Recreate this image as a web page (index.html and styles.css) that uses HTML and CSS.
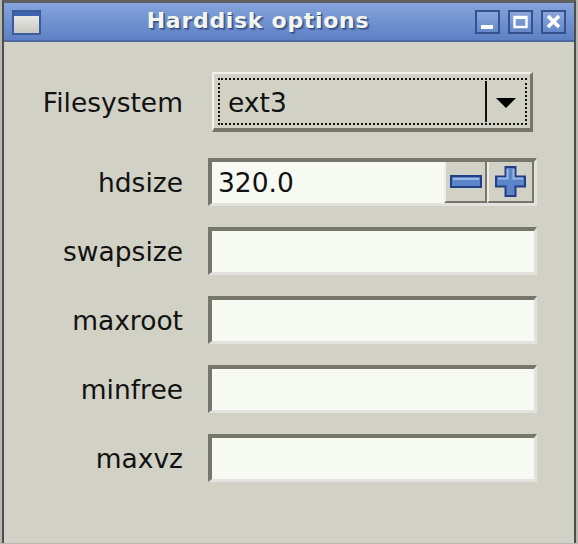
FILE: index.html
```html
<!DOCTYPE html>
<html>
<head>
<meta charset="utf-8">
<link rel="stylesheet" href="styles.css">
</head>
<body>
<div class="desk">
  <div class="window">
    <div class="titlebar">
      <div class="winicon"><div class="winicon-top"></div></div>
      <div class="title">Harddisk options</div>
      <div class="tbtns">
        <div class="tbtn"><svg width="17" height="16" viewBox="0 0 17 16"><rect x="2" y="11" width="12" height="4" fill="#fff"/></svg></div>
        <div class="tbtn"><svg width="17" height="16" viewBox="0 0 17 16"><rect x="2.5" y="3" width="12" height="10" fill="none" stroke="#fff" stroke-width="2.4"/><rect x="2" y="2" width="13" height="3" fill="#fff"/></svg></div>
        <div class="tbtn"><svg width="17" height="16" viewBox="0 0 17 16"><path d="M3 2 L14 13 M14 2 L3 13" stroke="#fff" stroke-width="3.6"/></svg></div>
      </div>
    </div>
    <div class="content">
      <div class="form">
        <div class="label lab-fs">Filesystem</div>
        <div class="combo">
          <div class="combo-focus">
            <span class="combo-text">ext3</span>
            <span class="combo-sep"></span>
            <span class="combo-arrow"><svg width="20" height="10" viewBox="0 0 20 10"><path d="M0 0 H20 L10 10 Z" fill="#000"/></svg></span>
          </div>
        </div>

        <div class="label">hdsize</div>
        <div class="entry spin">
          <div class="spin-text">320.0</div>
          <div class="spin-btn">
            <svg width="32" height="13" viewBox="0 0 32 13"><rect x="1" y="1" width="30" height="11" fill="#5a85c9" stroke="#223f86" stroke-width="2"/><rect x="3" y="3" width="26" height="2" fill="#9bb7e3"/></svg>
          </div>
          <div class="spin-btn">
            <svg width="31" height="31" viewBox="0 0 31 31"><path d="M10.5 1 H20.5 V10.5 H30 V20.5 H20.5 V30 H10.5 V20.5 H1 V10.5 H10.5 Z" fill="#5a85c9" stroke="#223f86" stroke-width="2"/><path d="M12.5 3 V12.5 H3 M18.5 3 V12.5 H28" stroke="#9bb7e3" stroke-width="2" fill="none"/></svg>
          </div>
        </div>

        <div class="label">swapsize</div>
        <div class="entry"></div>

        <div class="label">maxroot</div>
        <div class="entry"></div>

        <div class="label">minfree</div>
        <div class="entry"></div>

        <div class="label">maxvz</div>
        <div class="entry"></div>
      </div>
    </div>
  </div>
</div>
</body>
</html>
```

FILE: styles.css
```css
html, body {
  margin: 0;
  padding: 0;
}
body {
  width: 578px;
  height: 544px;
  overflow: hidden;
  background: #e9e8e2;
  font-family: "DejaVu Sans", "Liberation Sans", sans-serif;
}
.desk {
  height: 544px;
  padding-left: 2px;
  padding-right: 2px;
  background: #b9b8b0;
  box-sizing: border-box;
}
.window {
  height: 543px;
  box-sizing: border-box;
  border-left: 2px solid #4d4d4d;
  border-right: 2px solid #4d4d4d;
  border-top: 3px solid #606060;
  background: #d2d1c5;
  display: flex;
  flex-direction: column;
}
.titlebar {
  height: 37px;
  border-bottom: 2px solid #4a68a2;
  background: linear-gradient(to bottom, #86a4dc 0%, #7394d2 45%, #5e80c4 100%);
  display: flex;
  align-items: center;
  padding: 0 8px 0 8px;
}
.winicon {
  width: 25px;
  height: 21px;
  border: 2px solid #3b5c9c;
  background: linear-gradient(to bottom, #eeeeec 0%, #c9c8c2 100%);
  margin-top: 1px;
}
.winicon-top {
  height: 4px;
  background: #3d63b0;
}
.title {
  flex: 1;
  text-align: center;
  color: #f4f6ee;
  font-weight: bold;
  font-size: 22px;
  letter-spacing: 0.7px;
  text-shadow: 1px 1px 0 #34508a, 2px 2px 1px rgba(40,60,110,0.5);
  margin-top: -2px;
}
.tbtns {
  display: flex;
  gap: 8px;
}
.tbtn {
  width: 21px;
  height: 20px;
  border: 2px solid #36528e;
  background: linear-gradient(to bottom, #8aa6dc, #6688c9);
  display: flex;
  align-items: center;
  justify-content: center;
}
.content {
  flex: 1;
  padding-top: 30px;
}
.form {
  display: grid;
  grid-template-columns: 179px 329px;
  column-gap: 25px;
  row-gap: 21px;
  align-items: center;
}
.label {
  text-align: right;
  font-size: 26.5px;
  color: #111;
  padding-top: 1px;
}
.lab-fs {
  margin-bottom: 5px;
}
.combo {
  margin: 0 4px 5px 4px;
  height: 60px;
  box-sizing: border-box;
  border-top: 2px solid #f2f1ec;
  border-left: 2px solid #f2f1ec;
  border-right: 3px solid #77766a;
  border-bottom: 4px solid #77766a;
  padding: 4px 3px 3px 4px;
  background: #d2d1c5;
}
.combo-focus {
  height: 100%;
  box-sizing: border-box;
  border: 2px dotted #111;
  display: flex;
  align-items: center;
}
.combo-text {
  flex: 1;
  font-size: 26.5px;
  color: #111;
  padding-left: 8px;
  padding-top: 1px;
}
.combo-sep {
  align-self: stretch;
  width: 2px;
  background: #111;
  margin: 1px 0;
}
.combo-arrow {
  width: 38px;
  display: flex;
  justify-content: center;
  padding-top: 2px;
}
.entry {
  height: 48px;
  box-sizing: border-box;
  border-top: 4px solid #77766a;
  border-left: 4px solid #77766a;
  border-right: 3px solid #e3e2df;
  border-bottom: 3px solid #e3e2df;
  background: #f6faf3;
}
.spin {
  display: flex;
}
.spin-text {
  flex: 1;
  font-size: 26.5px;
  color: #111;
  padding-left: 6px;
  line-height: 41px;
}
.spin-btn {
  width: 43px;
  box-sizing: border-box;
  background: #d2d1c5;
  border-left: 2px solid #efeee9;
  border-right: 2px solid #77766a;
  border-bottom: 2px solid #77766a;
  display: flex;
  align-items: center;
  justify-content: center;
}
.spin-btn + .spin-btn {
  width: 47px;
}
```
